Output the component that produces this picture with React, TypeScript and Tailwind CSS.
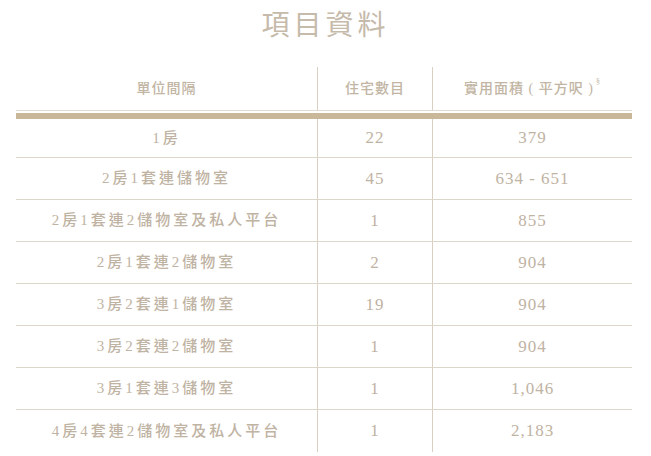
const rows: [string, string, string][] = [
  ["1房", "22", "379"],
  ["2房1套連儲物室", "45", "634 - 651"],
  ["2房1套連2儲物室及私人平台", "1", "855"],
  ["2房1套連2儲物室", "2", "904"],
  ["3房2套連1儲物室", "19", "904"],
  ["3房2套連2儲物室", "1", "904"],
  ["3房1套連3儲物室", "1", "1,046"],
  ["4房4套連2儲物室及私人平台", "1", "2,183"],
];

const font = "font-['Liberation_Serif','Noto_Sans_CJK_TC',serif]";

export default function App() {
  return (
    <div className={`w-[651px] h-[456px] bg-white overflow-hidden ${font}`}>
      <h1 className="pt-[8px] h-[67px] text-center text-[28px] leading-[36px] tracking-[4px] text-[#c6baab] font-normal">
        項目資料
      </h1>
      <div className="ml-[16px] w-[616px]">
        {/* header */}
        <div className="grid grid-cols-[302px_115px_199px] h-[43px] text-[14px] text-[#c2b5a4] font-medium">
          <div className="flex items-center justify-center border-r border-[#d9d0c3] tracking-[1px]">
            單位間隔
          </div>
          <div className="flex items-center justify-center border-r border-[#d9d0c3] tracking-[1px]">
            住宅數目
          </div>
          <div className="flex items-center justify-center tracking-[1px]">
            實用面積 ( 平方呎 )
            <sup className="text-[8px] ml-[2px] -mt-[6px]">§</sup>
          </div>
        </div>
        <div className="h-[1px] bg-[#e2dbd0]" />
        <div className="h-[2px]" />
        <div className="h-[6px] bg-[#c9b799]" />
        {/* body */}
        {rows.map((r, i) => (
          <div
            key={i}
            className={`grid grid-cols-[302px_115px_199px] text-[#bfb3a3] ${
              i === 0 ? "h-[39px]" : "h-[42px]"
            } ${i < rows.length - 1 ? "border-b border-[#dcd5ca]" : ""}`}
          >
            <div className="flex items-center justify-center border-r border-[#d9d0c3] text-[15px] tracking-[3px] font-medium">
              {r[0]}
            </div>
            <div className="flex items-center justify-center border-r border-[#d9d0c3] text-[17px] tracking-[1px]">
              {r[1]}
            </div>
            <div className="flex items-center justify-center text-[17px] tracking-[1px]">{r[2]}</div>
          </div>
        ))}
      </div>
    </div>
  );
}
